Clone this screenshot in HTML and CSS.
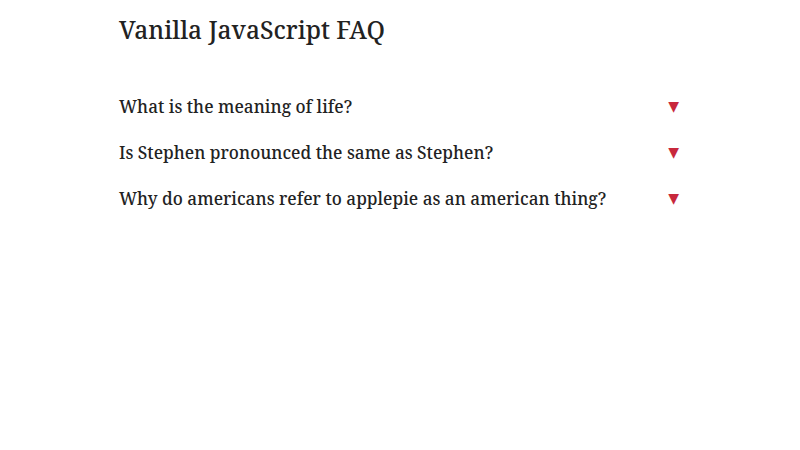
FILE: index.html
```html
<!DOCTYPE html>
<html lang="en">
<head>
    <meta charset="UTF-8">
    <meta name="viewport" content="width=device-width, initial-scale=1.0">
    <title>Vanilla JavaScript FAQ</title>
    <link rel="stylesheet" href="styles.css">
</head>
<body>

    <div class="container">
        <h1>Vanilla JavaScript FAQ</h1>
        <div class="faq">
            <div class="faq-item">
                <button class="question" onclick="toggleAnswer(this)">
                    <span>What is the meaning of life?</span>
                    <span class="arrow">&#9660;</span>
                </button>
                <div class="answer">42.</div>
            </div>
            <div class="faq-item">
                <button class="question" onclick="toggleAnswer(this)">
                    <span>Is Stephen pronounced the same as Stephen?</span>
                    <span class="arrow">&#9660;</span>
                </button>
                <div class="answer">Yes, most of the time.</div>
            </div>
            <div class="faq-item">
                <button class="question" onclick="toggleAnswer(this)">
                    <span>Why do americans refer to applepie as an american thing?</span>
                    <span class="arrow">&#9660;</span>
                </button>
                <div class="answer">Nobody really knows.</div>
            </div>
        </div>
    </div>

    <script>
        function toggleAnswer(button) {
            const item = button.parentElement;
            item.classList.toggle('open');
        }
    </script>
</body>
</html>
```
FILE: styles.css
```css
body {
    font-family: "Noto Serif", "DejaVu Serif", serif;
    margin: 0;
    padding: 0;
    background-color: #fff;
    color: #222;
}
.container {
    max-width: 562px;
    margin: 0 auto;
}
h1 {
    font-size: 24.5px;
    font-weight: 500;
    margin: 0;
    padding-top: 12px;
    line-height: 36px;
}
.faq {
    margin-top: 35px;
}
.question {
    display: flex;
    justify-content: space-between;
    align-items: center;
    width: 100%;
    background: none;
    border: none;
    padding: 0;
    height: 46px;
    font-family: inherit;
    font-size: 17.2px;
    font-weight: 520;
    color: #222;
    text-align: left;
    cursor: pointer;
}
.arrow {
    color: #c8283c;
    font-size: 14px;
    font-family: "DejaVu Sans", sans-serif;
    margin-right: 2px;
}
.answer {
    display: none;
    padding-bottom: 12px;
}
.faq-item.open .answer {
    display: block;
}
.faq-item.open .arrow {
    transform: rotate(180deg);
}
```
